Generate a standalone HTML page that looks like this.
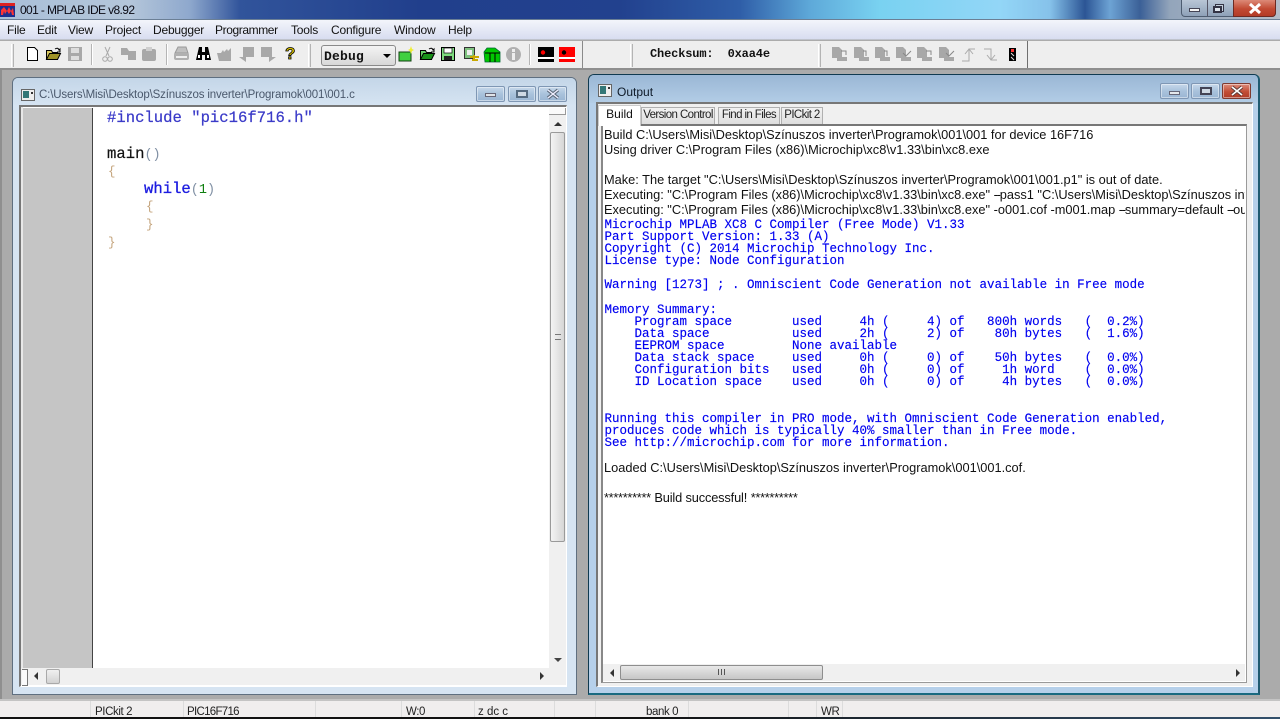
<!DOCTYPE html>
<html><head><meta charset="utf-8"><style>
html,body{margin:0;padding:0;width:1280px;height:719px;overflow:hidden;background:#ababab}
*{box-sizing:border-box}
.a{position:absolute}
.t{position:absolute;white-space:pre;font-family:"Liberation Sans",sans-serif;color:#000;line-height:14px}
.b{position:absolute;white-space:pre;left:3px;font-family:"Liberation Sans",sans-serif;font-size:12.8px;line-height:14px;color:#111}
.d{letter-spacing:-1.2px}
.m{position:absolute;white-space:pre;left:3.5px;margin-top:1px;font-family:"Liberation Mono",monospace;font-size:12.5px;line-height:12px;color:#0000f0;-webkit-text-stroke:.15px #0000f0}
.e{position:absolute;white-space:pre;font-family:"Liberation Mono",monospace;font-size:15.6px;line-height:18px;color:#111;-webkit-text-stroke:.2px #111}
.p{font-size:13.5px;color:#8090a4;-webkit-text-stroke:0}
.br{position:absolute;white-space:pre;font-family:"Liberation Mono",monospace;font-size:12.5px;line-height:18px;color:#c4a47c}
.menu{position:absolute;top:23px;font:12px/14px "Liberation Sans",sans-serif;color:#111;letter-spacing:-.2px}
.wb{position:absolute;width:29px;height:16px;border:1px solid #7f97b4;border-radius:2px;background:linear-gradient(#c6d8ea,#a9c2dc 50%,#9ab6d3);box-shadow:inset 0 0 0 1px rgba(255,255,255,.45)}
.tab{position:absolute;top:107px;height:17px;border:1px solid #b0b0b0;border-bottom:0;background:linear-gradient(#f2f2f2,#dedede);font:11.5px/15px "Liberation Sans",sans-serif;color:#222;text-align:center;letter-spacing:-.6px;white-space:nowrap;padding:0}
.sep{position:absolute;top:44px;width:2px;height:21px;background:#b5b5b5;border-right:1px solid #fff}
.grip{position:absolute;top:44px;width:3px;height:23px;border-left:1px solid #fff;border-right:1px solid #b4b4b4;background:#e8e8e8}
.sb{position:absolute;top:701px;width:1px;height:16px;background:#dcdcdc}
.st{font-size:11.5px;color:#222;top:3px}
svg{position:absolute;overflow:visible}
</style></head><body>

<!-- title bar -->
<div class="a" style="left:0;top:0;width:1280px;height:19px;background:linear-gradient(90deg,#a9bfd8 0,#b4c6da 130px,#8ea8cd 190px,#31549b 240px,#213f8c 420px,#22418e 620px,#2f5ea8 740px,#5ea9d9 810px,#79d2f1 880px,#93d6f7 1000px,#86c2ea 1050px,#2c5595 1085px,#6da3d4 1110px,#3b6097 1140px,#93a5bb 1170px,#b5bdc8 1280px)"></div>
<div class="a" style="left:0;top:19px;width:1280px;height:1px;background:#6b7f95"></div>
<svg style="left:0;top:3px" width="16" height="14" viewBox="0 0 16 14"><rect width="15" height="14" fill="#1c2f8f"/><rect width="15" height="3" fill="#d22"/><path d="M1 12V7l3-3 3 4 2-4 2 4 2-3 1 7h-2l-1-4-2 3-2-3-2 3-1-3-1 4z" fill="#f33"/></svg>
<div class="t" style="left:20px;top:3px;font-size:12px;color:#0a0a14;letter-spacing:-.62px">001 - MPLAB IDE v8.92</div>
<div class="a" style="left:1181px;top:0;width:95px;height:17px;border:1px solid #4d5c70;border-top:0;border-radius:0 0 4px 4px;background:linear-gradient(#b9c6d6,#8ea1b8)"></div>
<div class="a" style="left:1233px;top:0;width:43px;height:17px;border:1px solid #6d2a22;border-top:0;border-radius:0 0 4px 0;background:linear-gradient(#dc8a78,#c24a33 55%,#b33b26)"></div>
<div class="a" style="left:1207px;top:0;width:1px;height:16px;background:#556"></div>
<div class="a" style="left:1189px;top:8px;width:11px;height:4px;background:#f4f4f4;border:1px solid #445"></div>
<div class="a" style="left:1215px;top:4px;width:9px;height:8px;background:#c4d0dd;border:1px solid #334"></div>
<div class="a" style="left:1213px;top:6px;width:9px;height:7px;background:#dfe6ee;border:2px solid #334"></div>
<svg style="left:1249px;top:3px" width="12" height="11" viewBox="0 0 12 11"><path d="M1 1l10 9M11 1L1 10" stroke="#fff" stroke-width="3"/></svg>

<!-- menu -->
<div class="a" style="left:0;top:20px;width:1280px;height:20px;background:linear-gradient(#f3f5fb,#d8ddf0);border-bottom:1px solid #bfc3cc"></div>
<div class="menu" style="left:7px">File</div>
<div class="menu" style="left:37px">Edit</div>
<div class="menu" style="left:68px">View</div>
<div class="menu" style="left:105px">Project</div>
<div class="menu" style="left:153px">Debugger</div>
<div class="menu" style="left:215px;letter-spacing:-.4px">Programmer</div>
<div class="menu" style="left:291px">Tools</div>
<div class="menu" style="left:331px">Configure</div>
<div class="menu" style="left:394px">Window</div>
<div class="menu" style="left:448px">Help</div>

<!-- toolbar -->
<div class="a" style="left:0;top:41px;width:1280px;height:28px;background:#eeeeee;border-bottom:1px solid #bbb"></div>
<div class="grip" style="left:11px"></div>
<svg style="left:27px;top:47px" width="11" height="14"><path d="M.5.5h7l3 3v10H.5z" fill="#fff" stroke="#000"/></svg>
<svg style="left:46px;top:47px" width="15" height="14"><path d="M.5 3.500h5l1 2h5v7H.5z" fill="#d8c860" stroke="#000"/><path d="M.5 12.500l3-6h11l-3 6z" fill="#a09428" stroke="#000"/><path d="M9 2q3-2 4 1l1-1v3h-3" fill="none" stroke="#000"/></svg>
<svg style="left:68px;top:47px" width="14" height="14"><rect width="14" height="14" fill="#a8a8a8"/><rect x="3" y="1" width="8" height="5" fill="#ddd"/><rect x="3" y="9" width="8" height="4" fill="#ddd"/></svg>
<div class="sep" style="left:91px"></div>
<svg style="left:102px;top:47px" width="11" height="15"><path d="M3 0l4 9M8 0L4 9" stroke="#aaa" fill="none"/><circle cx="3" cy="12" r="2.300" fill="none" stroke="#aaa"/><circle cx="8" cy="12" r="2.300" fill="none" stroke="#aaa"/></svg>
<svg style="left:121px;top:48px" width="15" height="12"><path d="M0 0h6l2 3h7v9H7V7H0z" fill="#a8a8a8"/></svg>
<svg style="left:142px;top:47px" width="14" height="14"><rect y="2" width="14" height="12" rx="2" fill="#a8a8a8"/><rect x="4" width="6" height="4" fill="#cfcfcf"/></svg>
<div class="sep" style="left:166px"></div>
<svg style="left:174px;top:47px" width="15" height="14"><path d="M4 0h8l2 6H1z" fill="#c0c0c0" stroke="#999"/><rect y="6" width="15" height="7" rx="2" fill="#b0b0b0"/><rect x="2" y="9" width="11" height="2" fill="#eee"/></svg>
<svg style="left:196px;top:47px" width="15" height="14"><path d="M3 0h3v5h3V0h3l3 13H9V8H6v5H0z" fill="#000"/><rect x="2" y="8" width="2" height="3" fill="#fff"/><rect x="11" y="8" width="2" height="3" fill="#fff"/></svg>
<svg style="left:217px;top:47px" width="15" height="14"><path d="M0 6h4l2-3 1 2 3-3 1 2 3-3v13H2z" fill="#a8a8a8"/></svg>
<svg style="left:239px;top:47px" width="15" height="15"><path d="M4 0h11v10H7v5L0 10h4z" fill="#a8a8a8"/></svg>
<svg style="left:261px;top:47px" width="15" height="15"><path d="M0 0h11v10h4l-7 5v-5H0z" fill="#a8a8a8"/></svg>
<div class="t" style="left:285px;top:45px;font:bold 17px/17px 'Liberation Sans',sans-serif;color:#d8c000;-webkit-text-stroke:.8px #000">?</div>
<div class="grip" style="left:308px"></div>
<div class="a" style="left:321px;top:45px;width:75px;height:21px;border:1px solid #8a8a8a;border-radius:3px;background:linear-gradient(#f4f4f4,#d8d8d8)"></div>
<div class="t" style="left:324px;top:49px;font:bold 13px/15px 'Liberation Mono',monospace;color:#111;letter-spacing:.2px">Debug</div>
<div class="a" style="left:383px;top:54px;border:4px solid transparent;border-top:4px solid #000;border-bottom:0"></div>
<svg style="left:398px;top:46px" width="16" height="16"><rect x="1" y="6" width="12" height="9" fill="#40d040" stroke="#104010"/><path d="M13 0l1 3 2 1-2 1-1 3-1-3-2-1 2-1z" fill="#ee3"/></svg>
<svg style="left:420px;top:47px" width="15" height="14"><path d="M.5 3.500h5l1 2h5v7H.5z" fill="#6c6" stroke="#000"/><path d="M.5 12.500l3-6h11l-3 6z" fill="#189018" stroke="#000"/><path d="M9 2q3-2 4 1l1-1v3h-3" fill="none" stroke="#000"/></svg>
<svg style="left:441px;top:47px" width="14" height="14"><rect x=".5" y=".5" width="13" height="13" fill="#7fdc7f" stroke="#000"/><rect x="3" y="1" width="8" height="5" fill="#fff" stroke="#000" stroke-width=".7"/><rect x="3" y="9" width="8" height="4" fill="#222"/></svg>
<svg style="left:464px;top:47px" width="15" height="15"><rect x=".5" y=".5" width="10" height="11" fill="#7fc27f" stroke="#333"/><rect x="3" y="3" width="5" height="5" fill="#eee"/><path d="M6 10h9M8 13h6M10 8v6" stroke="#c8a800" stroke-width="2"/></svg>
<svg style="left:484px;top:48px" width="16" height="14"><path d="M0 4l3-4h8l5 4v10H1z" fill="#00c800" stroke="#063" stroke-width=".8"/><path d="M1 5h15M6 5v9M11 5v9" stroke="#000"/></svg>
<svg style="left:506px;top:47px" width="15" height="15"><circle cx="7.500" cy="7.500" r="7.500" fill="#b0b0b0"/><rect x="6" y="6" width="3" height="7" fill="#eee"/><rect x="6" y="2" width="3" height="3" fill="#eee"/></svg>
<div class="sep" style="left:529px"></div>
<svg style="left:538px;top:47px" width="16" height="15"><rect width="16" height="15" fill="#000"/><circle cx="5" cy="5.500" r="2.200" fill="#f00"/><rect y="10" width="16" height="2" fill="#fff"/></svg>
<svg style="left:559px;top:47px" width="16" height="15"><rect width="16" height="15" fill="#f00"/><circle cx="5" cy="5.500" r="2.200" fill="#000"/><rect y="10" width="16" height="2" fill="#fff"/></svg>
<div class="a" style="left:582px;top:41px;width:1px;height:27px;background:#8a8a8a"></div>
<div class="grip" style="left:630px"></div>
<div class="t" style="left:650px;top:47px;font:bold 12px/14px 'Liberation Mono',monospace;color:#111;letter-spacing:-.15px">Checksum:  0xaa4e</div>
<div class="grip" style="left:818px"></div>
<svg style="left:832px;top:47px" width="195" height="16" fill="#a8a8a8" stroke="none">
<path d="M0 0h7l3 3v8H0z"/><rect x="5" y="10" width="10" height="4"/><path d="M9 4h5v4" fill="none" stroke="#888"/>
<path d="M22 0h7l3 3v8H22z"/><rect x="27" y="10" width="10" height="4"/><path d="M34 9V4h-3" fill="none" stroke="#888"/>
<path d="M43 0h7l3 3v8H43z"/><rect x="48" y="10" width="10" height="4"/><path d="M55 9V4h-3" fill="none" stroke="#888"/>
<path d="M64 0h7l3 3v8H64z"/><rect x="69" y="10" width="10" height="4"/><path d="M71 6l3 3 5-5" fill="none" stroke="#888"/>
<path d="M85 0h7l3 3v8H85z"/><rect x="90" y="10" width="10" height="4"/><path d="M94 4h5v4" fill="none" stroke="#888"/>
<path d="M107 0h7l3 3v8h-10z"/><rect x="112" y="10" width="10" height="4"/><path d="M114 6l3 3 5-5" fill="none" stroke="#888"/>
<path d="M130 14h7V2h6M137 2l-4 5M137 2l4 5" fill="none" stroke="#aaa" stroke-width="1"/>
<path d="M152 2h7v11h6M159 13l-4-5M159 13l4-5" fill="none" stroke="#aaa" stroke-width="1"/>
<rect x="177" y="1" width="7" height="13" fill="#000"/><rect x="179" y="2" width="3" height="3" fill="#f33"/><path d="M179 6l3 3M179 10l3 3" stroke="#ddd" fill="none"/>
</svg>
<div class="a" style="left:1027px;top:41px;width:1px;height:27px;background:#6f6f6f"></div>

<div class="a" style="left:0;top:68px;width:1280px;height:2px;background:#8e8e8e"></div>
<div class="a" style="left:0;top:70px;width:2px;height:630px;background:#8f8f8f"></div>

<!-- left window -->
<div class="a" style="left:12px;top:77px;width:565px;height:618px;border:1px solid #5f6f80;border-radius:6px 6px 0 0;background:#d6e4f2;overflow:hidden">
  <div class="a" style="left:0;top:0;width:563px;height:28px;background:linear-gradient(#c4d6e8,#d6e4f2)"></div>
</div>
<svg style="left:21px;top:89px" width="14" height="12"><rect x=".5" y=".5" width="13" height="11" fill="#eee" stroke="#666"/><rect x="2" y="2" width="6" height="7" fill="#377"/><rect x="10" y="3" width="2" height="2" fill="#333"/></svg>
<div class="t" style="left:39px;top:88px;font-size:11.5px;color:#4a586c;letter-spacing:-.15px">C:\Users\Misi\Desktop\Színuszos inverter\Programok\001\001.c</div>
<div class="wb" style="left:476px;top:86px"></div>
<div class="wb" style="left:508px;top:86px;width:28px"></div>
<div class="wb" style="left:538px;top:86px"></div>
<div class="a" style="left:485px;top:93px;width:11px;height:4px;background:#dfe3e8;border:1px solid #667"></div>
<div class="a" style="left:516px;top:90px;width:12px;height:8px;background:#cfd9e4;border:2px solid #556a80"></div>
<svg style="left:546px;top:89px" width="14" height="10"><path d="M2 1l10 8M12 1L2 9" stroke="#5c6a7a" stroke-width="3.400"/><path d="M2 1l10 8M12 1L2 9" stroke="#eef" stroke-width="1.400"/></svg>
<!-- editor -->
<div class="a" style="left:19px;top:105px;width:548px;height:582px;background:#fff;border:1px solid #fff;border-top:2px solid #777;border-left:2px solid #777"></div>
<div class="a" style="left:23px;top:108px;width:70px;height:560px;background:#c5c5c5;border-right:1px solid #444"></div>
<div class="a" style="left:21px;top:107px;width:2px;height:578px;background:#e8e8e8"></div>
<div class="e" style="left:107px;top:109px;color:#3a3ac8;-webkit-text-stroke:.2px #3a3ac8">#include "pic16f716.h"</div>
<div class="e" style="left:107px;top:145px">main<span class="p">()</span></div>
<div class="br" style="left:108px;top:163px">{</div>
<div class="e" style="left:144px;top:180px;color:#1c1ce0;-webkit-text-stroke:.3px #1c1ce0">while<span class="p">(</span><span class="p" style="color:#108010">1</span><span class="p">)</span></div>
<div class="br" style="left:146px;top:198px">{</div>
<div class="br" style="left:146px;top:216px">}</div>
<div class="br" style="left:108px;top:234px">}</div>
<!-- left scroll -->
<div class="a" style="left:549px;top:108px;width:17px;height:560px;background:#f0f0f0"></div>
<div class="a" style="left:549px;top:108px;width:17px;height:7px;background:#fafafa;border-bottom:1px solid #999;border-right:1px solid #999"></div>
<div class="a" style="left:554px;top:122px;border:4px solid transparent;border-bottom:4px solid #333;border-top:0"></div>
<div class="a" style="left:550px;top:132px;width:15px;height:410px;border:1px solid #9a9a9a;border-radius:2px;background:linear-gradient(90deg,#f4f4f4,#d6d6d6)"></div>
<div class="a" style="left:555px;top:334px;width:6px;height:6px;border-top:1px solid #777;border-bottom:1px solid #777"></div>
<div class="a" style="left:554px;top:658px;border:4px solid transparent;border-top:4px solid #444;border-bottom:0"></div>
<div class="a" style="left:21px;top:668px;width:545px;height:17px;background:#f0f0f0"></div>
<div class="a" style="left:22px;top:669px;width:6px;height:17px;background:#fafafa;border:1px solid #777;border-left:0"></div>
<div class="a" style="left:34px;top:672px;border:4px solid transparent;border-right:4px solid #333;border-left:0"></div>
<div class="a" style="left:46px;top:669px;width:14px;height:15px;border:1px solid #a9a9a9;border-radius:2px;background:linear-gradient(#f0f0f0,#d2d2d2)"></div>
<div class="a" style="left:540px;top:672px;border:4px solid transparent;border-left:4px solid #333;border-right:0"></div>

<!-- output window -->
<div class="a" style="left:588px;top:74px;width:672px;height:621px;border:1px solid #103a50;border-right:2px solid #1f5a70;border-bottom:2px solid #1a6a80;border-radius:6px 6px 0 0;background:#b6d0ea;overflow:hidden">
  <div class="a" style="left:0;top:0;width:670px;height:28px;background:linear-gradient(#9ab7d5,#b3cde6)"></div>
</div>
<svg style="left:598px;top:84px" width="14" height="13"><rect x=".5" y=".5" width="13" height="12" fill="#eee" stroke="#666"/><rect x="2" y="2" width="6" height="8" fill="#377"/><rect x="10" y="3" width="2" height="2" fill="#333"/></svg>
<div class="t" style="left:617px;top:85px;font-size:12px;color:#0e1a28">Output</div>
<div class="wb" style="left:1160px;top:83px;width:29px"></div>
<div class="wb" style="left:1191px;top:83px;width:29px"></div>
<div class="wb" style="left:1222px;top:83px;width:29px;background:linear-gradient(#dd8d7c,#c24d36 55%,#b03c28);border-color:#7e3a30"></div>
<div class="a" style="left:1169px;top:91px;width:11px;height:4px;background:#e5e8ec;border:1px solid #667"></div>
<div class="a" style="left:1200px;top:87px;width:12px;height:8px;background:#cfd9e4;border:2px solid #445"></div>
<svg style="left:1230px;top:86px" width="14" height="10"><path d="M2 1l10 8M12 1L2 9" stroke="#5a3a36" stroke-width="3.400"/><path d="M2 1l10 8M12 1L2 9" stroke="#fff" stroke-width="1.600"/></svg>
<div class="a" style="left:596px;top:102px;width:657px;height:585px;background:#f0f0f0;border:1px solid #fff;border-top:2px solid #777;border-left:2px solid #777"></div>
<div class="tab" style="left:641px;width:74px">Version Control</div>
<div class="tab" style="left:718px;width:62px">Find in Files</div>
<div class="tab" style="left:781px;width:42px">PICkit 2</div>
<div class="a" style="left:601px;top:124px;width:646px;height:559px;background:#fff;border:1px solid #9a9a9a;border-top:2px solid #777;border-left:2px solid #888"></div>
<div class="a" style="left:598px;top:105px;width:43px;height:21px;background:#fff;border:1px solid #ccc;border-bottom:0;font:12px/16px 'Liberation Sans',sans-serif;text-align:center;color:#111;z-index:2">Build</div>
<div class="a" style="left:601px;top:126px;width:644px;height:538px;overflow:hidden">
<div class="b" style="top:2px">Build C:\Users\Misi\Desktop\Színuszos inverter\Programok\001\001 for device 16F716</div>
<div class="b" style="top:17px">Using driver C:\Program Files (x86)\Microchip\xc8\v1.33\bin\xc8.exe</div>
<div class="b" style="top:47px">Make: The target "C:\Users\Misi\Desktop\Színuszos inverter\Programok\001\001.p1" is out of date.</div>
<div class="b" style="top:62px">Executing: "C:\Program Files (x86)\Microchip\xc8\v1.33\bin\xc8.exe" <span class="d">--</span>pass1 "C:\Users\Misi\Desktop\Színuszos inverter\Programok\001\001.c" -q --chip=16F716 -P</div>
<div class="b" style="top:77px">Executing: "C:\Program Files (x86)\Microchip\xc8\v1.33\bin\xc8.exe" -o001.cof -m001.map <span class="d">--</span>summary=default <span class="d">--</span>output=default 001.p1 --chip=16F716 -P --runtime=default</div>
<div class="m" style="top:92px">Microchip MPLAB XC8 C Compiler (Free Mode) V1.33</div>
<div class="m" style="top:104px">Part Support Version: 1.33 (A)</div>
<div class="m" style="top:116px">Copyright (C) 2014 Microchip Technology Inc.</div>
<div class="m" style="top:128px">License type: Node Configuration</div>
<div class="m" style="top:152px">Warning [1273] ; . Omniscient Code Generation not available in Free mode</div>
<div class="m" style="top:177px">Memory Summary:</div>
<div class="m" style="top:189px">    Program space        used     4h (     4) of   800h words   (  0.2%)</div>
<div class="m" style="top:201px">    Data space           used     2h (     2) of    80h bytes   (  1.6%)</div>
<div class="m" style="top:213px">    EEPROM space         None available</div>
<div class="m" style="top:225px">    Data stack space     used     0h (     0) of    50h bytes   (  0.0%)</div>
<div class="m" style="top:237px">    Configuration bits   used     0h (     0) of     1h word    (  0.0%)</div>
<div class="m" style="top:249px">    ID Location space    used     0h (     0) of     4h bytes   (  0.0%)</div>
<div class="m" style="top:286px">Running this compiler in PRO mode, with Omniscient Code Generation enabled,</div>
<div class="m" style="top:298px">produces code which is typically 40% smaller than in Free mode.</div>
<div class="m" style="top:310px">See http://microchip.com for more information.</div>
<div class="b" style="top:335px">Loaded C:\Users\Misi\Desktop\Színuszos inverter\Programok\001\001.cof.</div>
<div class="b" style="top:365px"><span style="letter-spacing:-.3px">**********</span> <span style="letter-spacing:-.15px">Build successful!</span> <span style="letter-spacing:-.3px">**********</span></div>
</div>
<!-- output hscroll -->
<div class="a" style="left:603px;top:664px;width:642px;height:17px;background:#f0f0f0"></div>
<div class="a" style="left:610px;top:669px;border:4px solid transparent;border-right:4px solid #333;border-left:0"></div>
<div class="a" style="left:620px;top:665px;width:203px;height:15px;border:1px solid #8e8e8e;border-radius:2px;background:linear-gradient(#e8e8e8,#c6c6c6)"></div>
<div class="a" style="left:718px;top:669px;width:7px;height:6px;border-left:1px solid #555;border-right:1px solid #555"></div>
<div class="a" style="left:721px;top:669px;width:1px;height:6px;background:#555"></div>
<div class="a" style="left:1236px;top:669px;border:4px solid transparent;border-left:4px solid #333;border-right:0"></div>

<!-- status bar -->
<div class="a" style="left:0;top:699px;width:1280px;height:2px;background:#c4c4c4"></div>
<div class="a" style="left:0;top:701px;width:1280px;height:16px;background:#f0eeee"></div>
<div class="a" style="left:0;top:717px;width:1280px;height:2px;background:linear-gradient(90deg,#111,#111 50%,#33506c)"></div>
<div class="sb" style="left:90px"></div><div class="sb" style="left:183px"></div><div class="sb" style="left:315px"></div><div class="sb" style="left:401px"></div><div class="sb" style="left:474px"></div><div class="sb" style="left:554px"></div><div class="sb" style="left:595px"></div><div class="sb" style="left:688px"></div><div class="sb" style="left:788px"></div><div class="sb" style="left:816px"></div><div class="sb" style="left:842px"></div>
<div class="a" style="left:0;top:701px;width:1280px;height:16px;overflow:hidden">
<div class="t st" style="left:95px;top:4px;letter-spacing:-.4px">PICkit 2</div>
<div class="t st" style="left:187px;top:4px;letter-spacing:-.7px">PIC16F716</div>
<div class="t st" style="left:406px;top:4px;letter-spacing:-.4px">W:0</div>
<div class="t st" style="left:478px;top:4px">z dc c</div>
<div class="t st" style="left:646px;top:4px;letter-spacing:-.4px">bank 0</div>
<div class="t st" style="left:821px;top:4px;letter-spacing:-.3px">WR</div>
</div>
</body></html>
